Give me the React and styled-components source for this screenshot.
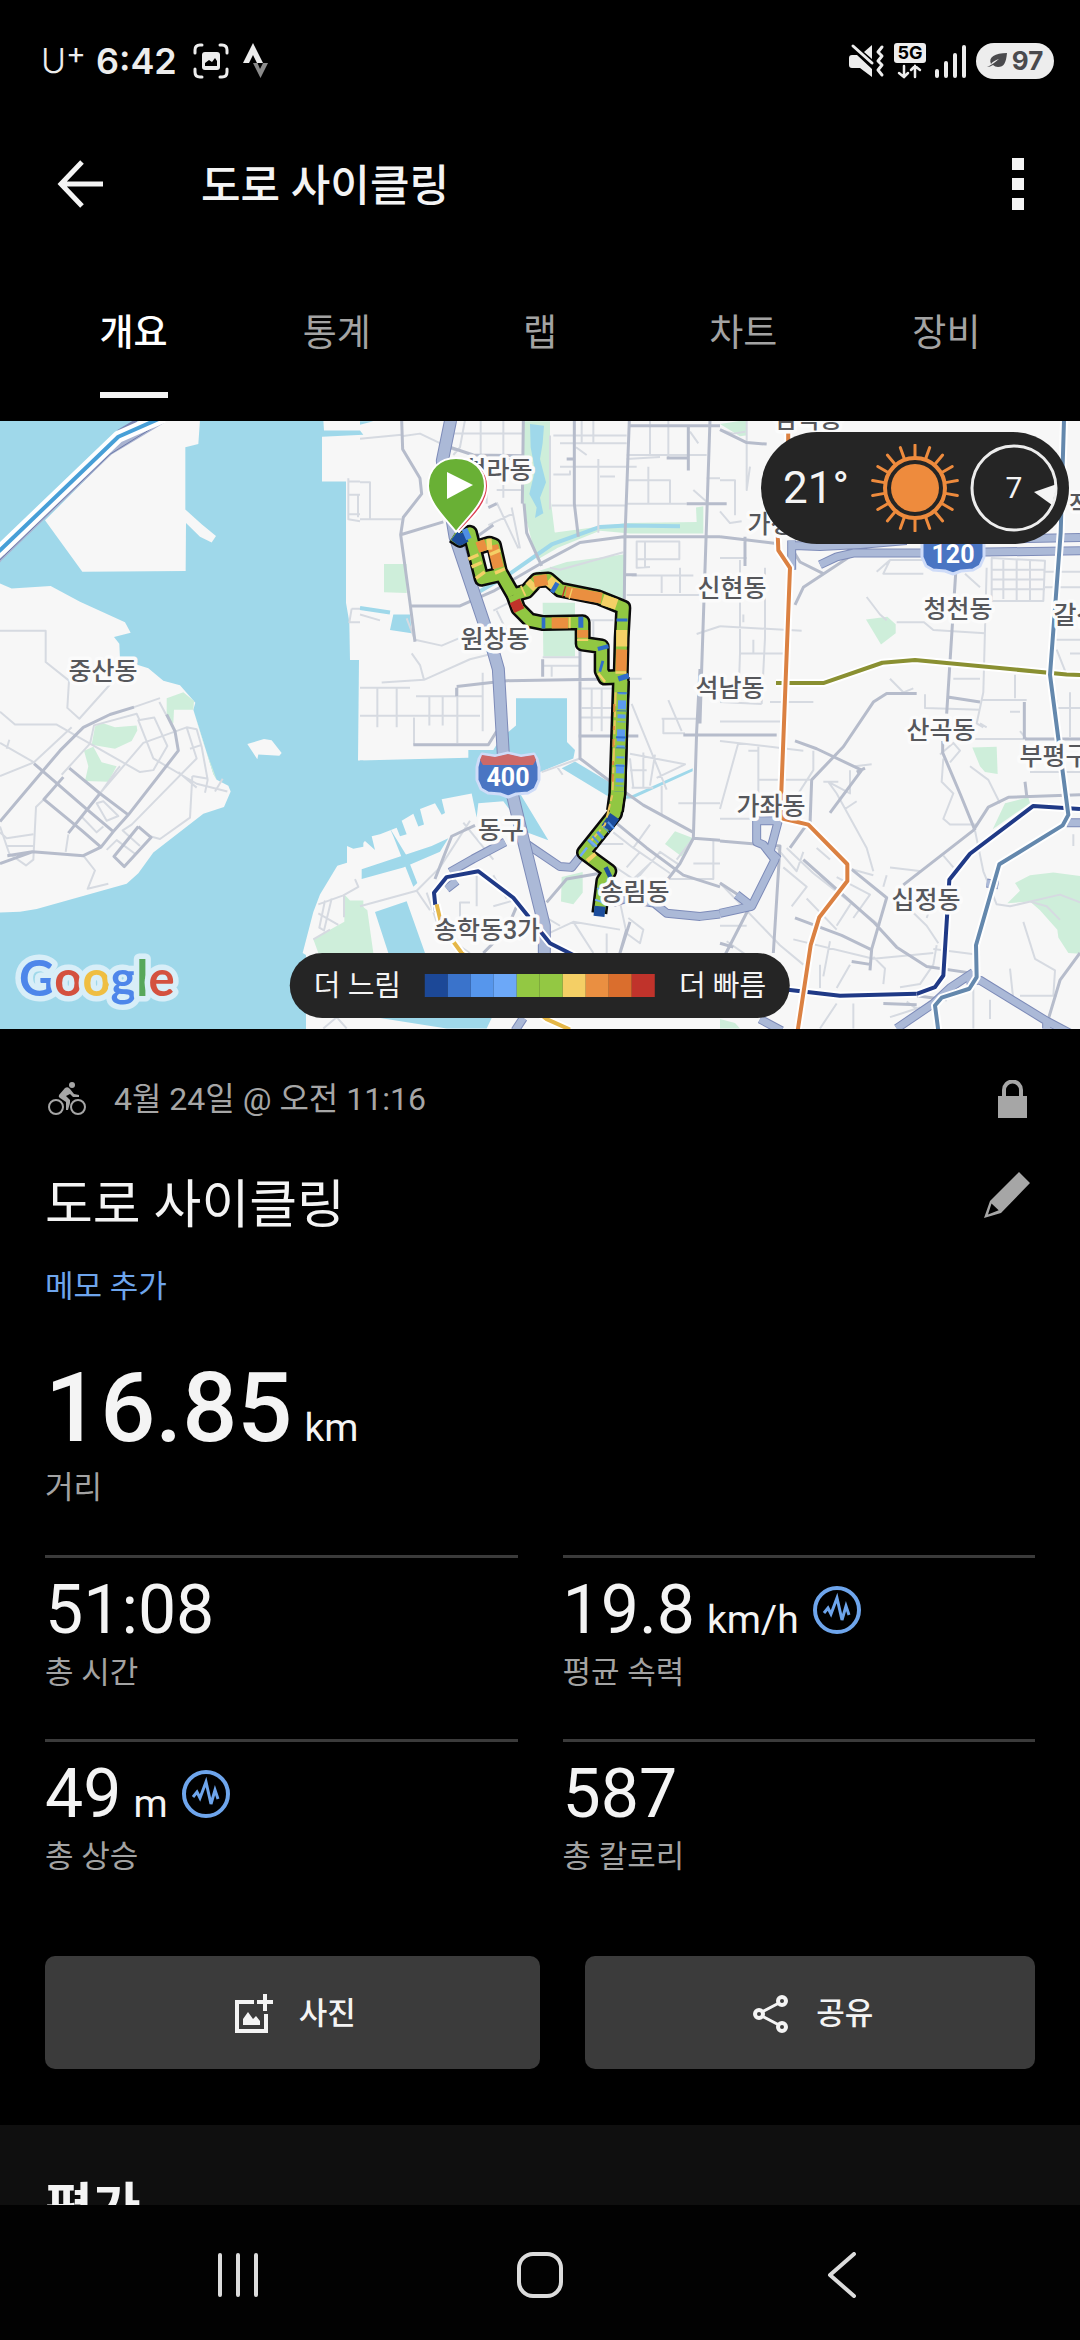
import React, { useState } from 'react'
import styled, { createGlobalStyle } from "styled-components";

const GlobalStyle = createGlobalStyle`
    * { box-sizing:border-box; }
    body {
        margin:0;
        background-color:#000;
        color:#f4f4f4;
        font-family:Roboto, "Noto Sans CJK KR", sans-serif;
    }
    button {
        font-family:inherit;
        color:inherit;
        background-color:transparent;
        border:none;
        padding:0;
        cursor:pointer;
    }
    svg { display:block; }
`;

const Page = styled.div`
    height:100vh;
    display:flex;
    flex-direction:column;
    background-color:#000;
`;

/* status bar */
const StatusBar = styled.div`
    flex:none;
    height:122px;
    padding:0 26px 0 41px;
    display:flex;
    align-items:center;
    justify-content:space-between;
    color:#ededed;
`;
const StatusGroup = styled.div`
    display:flex;
    align-items:center;
    gap:${props => props.$gap}px;
`;
const Carrier = styled.span`
    font-family:Inter, sans-serif;
    font-weight:300;
    font-size:34px;
    line-height:40px;
    display:flex;
`;
const CarrierPlus = styled.span`
    font-size:30px;
    line-height:24px;
    font-weight:400;
`;
const Clock = styled.span`
    font-family:Inter, sans-serif;
    font-weight:600;
    font-size:36px;
    line-height:40px;
    margin-right:6px;
`;
const Battery = styled.span`
    height:36px;
    width:78px;
    border-radius:18px;
    background-color:#ededed;
    color:#4a4a4d;
    display:flex;
    align-items:center;
    justify-content:center;
    gap:5px;
    font-family:Inter, sans-serif;
    font-size:26px;
    line-height:36px;
    font-weight:700;
`;

/* app bar */
const AppBar = styled.header`
    flex:none;
    height:124px;
    padding:0 45px;
    display:flex;
    align-items:center;
`;
const IconButton = styled.button`
    width:${props => props.$width || 60}px;
    height:60px;
    flex:none;
    display:flex;
    align-items:center;
    justify-content:${props => props.$align || "center"};
`;
const BarTitle = styled.h1`
    flex:1;
    margin:0 0 0 84px;
    padding-top:4px;
    font-size:43px;
    line-height:60px;
    font-weight:500;
`;

/* tabs */
const Tabs = styled.nav`
    flex:none;
    padding:58px 32px 23px;
    display:grid;
    grid-template-columns:repeat(5, 1fr);
    justify-items:center;
`;
const Tab = styled.button`
    font-size:37px;
    line-height:60px;
    font-weight:${props => props.$active ? 500 : 400};
    color:${props => props.$active ? "#fff" : "#a3a3a3"};
    padding-bottom:28px;
    border-bottom:6px solid ${props => props.$active ? "#f4f4f4" : "transparent"};
`;

const Scroll = styled.main`
    flex:1;
    min-height:0;
    overflow-y:auto;
    scrollbar-width:none;
`;

/* map */
const MapWrap = styled.div`
    position:relative;
    overflow:hidden;
`;
const MapSvg = styled.svg`
    width:100%;
    height:auto;
    path { vector-effect:non-scaling-stroke; fill:none; stroke-linejoin:round; }
`;
const Place = styled.text`
    font-size:25px;
    font-weight:500;
    fill:#56575b;
    stroke:#fbfbfb;
    stroke-width:7px;
    stroke-linejoin:round;
    paint-order:stroke;
    text-anchor:middle;
`;
const ShieldText = styled.text`
    font-family:Roboto, sans-serif;
    font-size:25px;
    font-weight:700;
    fill:#fff;
    text-anchor:middle;
`;
const MapLogo = styled.text`
    font-family:Lato, sans-serif;
    font-size:49px;
    font-weight:700;
    stroke:#d8eef8;
    stroke-width:11px;
    stroke-linejoin:round;
    paint-order:stroke;
`;
const Weather = styled.div`
    position:absolute;
    top:11px;
    right:11px;
    height:112px;
    padding:0 11px 0 22px;
    border-radius:56px;
    background-color:#252525;
    display:flex;
    align-items:center;
    gap:11px;
`;
const Temperature = styled.span`
    font-size:44px;
    line-height:60px;
    margin-right:11px;
`;
const Legend = styled.div`
    position:absolute;
    bottom:11px;
    left:50%;
    transform:translateX(-50%);
    height:65px;
    padding:0 24px;
    border-radius:33px;
    background-color:#252525;
    display:flex;
    align-items:center;
    gap:24px;
    font-size:29px;
    line-height:40px;
    white-space:nowrap;
`;
const Ramp = styled.div`
    display:flex;
    height:23px;
`;
const Swatch = styled.div`
    width:23px;
    background-color:${props => props.$color};
`;

/* details */
const Details = styled.section`
    padding:40px 45px 56px;
`;
const Row = styled.div`
    display:flex;
    align-items:center;
    justify-content:space-between;
`;
const Meta = styled.div`
    display:flex;
    align-items:center;
    gap:27px;
    padding-left:3px;
    font-size:32px;
    line-height:60px;
    color:#a6a6a6;
`;
const ActivityName = styled.h2`
    margin:41px 0 0;
    font-size:52px;
    line-height:72px;
    font-weight:400;
`;
const EditButton = styled(IconButton)`
    margin-top:18px;
`;
const NoteLink = styled.a`
    display:inline-block;
    margin-top:25px;
    font-size:31px;
    line-height:40px;
    color:#6ea5ec;
    text-decoration:none;
`;
const Distance = styled.div`
    margin-top:45px;
    font-size:97px;
    line-height:112px;
    font-weight:500;
`;
const Unit = styled.span`
    font-size:39px;
    line-height:40px;
    font-weight:400;
    margin-left:12px;
`;
const Label = styled.div`
    margin-top:4px;
    font-size:31px;
    line-height:40px;
    color:#a3a3a3;
`;
const Stats = styled.div`
    margin-top:47px;
    display:grid;
    grid-template-columns:1fr 1fr;
    column-gap:45px;
`;
const Stat = styled.div`
    border-top:3px solid #3b3b3b;
    padding:13px 0 46px;
`;
const Value = styled.div`
    display:flex;
    align-items:baseline;
    font-size:68px;
    line-height:78px;
`;
const GraphButton = styled.button`
    align-self:center;
    margin-left:14px;
`;
const Actions = styled.div`
    margin-top:33px;
    display:flex;
    gap:45px;
`;
const ActionButton = styled.button`
    flex:${props => props.$grow};
    height:113px;
    padding:2px 0 0 6px;
    border-radius:10px;
    background-color:#3b3b3b;
    display:flex;
    align-items:center;
    justify-content:center;
    gap:26px;
    font-size:31px;
    line-height:40px;
    font-weight:500;
`;
const Rating = styled.section`
    padding:48px 45px 60px;
    background-color:#0f0f0f;
`;
const RatingTitle = styled.h2`
    margin:0;
    font-size:52px;
    line-height:72px;
    font-weight:700;
`;

const NavBar = styled.nav`
    flex:none;
    height:135px;
    padding:5px 87px 0;
    background-color:#020202;
    display:grid;
    grid-template-columns:repeat(3, 1fr);
    align-items:center;
    justify-items:center;
`;

/* map data, three tiles side by side */
const tiles = [
    {
        land: "M-5 -5H3300V1600H-5Z",
        water: `M0 0H970L972 27H1080L1090 38 966 43V158H1038V470L1048 520 1050 617H1077L1074 875H1090V1097L1060 1102 1041 1095V1138L1012 1146 960 1220 940 1265 908 1370 918 1375V1570H0V1266L60 1264 110 1257 380 1192 415 1165 460 1112 610 1012 672 995 692 955 685 940 650 925 640 910 580 745 586 727 540 682 490 670 445 638 360 615 358 575 342 558 392 547 375 520 240 467 152 427 35 433 0 420Z`,
        isle: "M742 833 792 820 815 823 845 856 838 863 775 860 772 872ZM135 258 330 90 480 0H600L595 62 556 70V230L605 268 648 298 635 315 600 300 558 265 557 388 247 390Z",
        park: `M1033 1220 1050 1235H1090V1370H955L940 1335 990 1310 1033 1290ZM285 788 305 778 345 790 410 785 412 798 395 825 345 845 275 835ZM252 850 280 840 305 880 350 890 325 930 255 928 265 890ZM500 715 550 700 582 722 580 745H522L520 780 500 765ZM580 745 640 910 650 925 610 830Z`,
        minor: `M0 542H137V622L207 670 202 740 238 768 330 680M0 750 45 783H170L270 832 420 905 460 900 502 838 463 765 415 772 460 870 590 935 682 955M0 830 102 880 0 915M102 880 215 790M20 845 28 822M270 832 282 785 410 755 418 770M270 832 185 912M300 960 430 830 560 790 590 795 605 840 623 925 615 958M560 790 590 870 395 1040 368 1055 420 1095M300 960 350 900 360 890M577 915 570 1022 480 1077 450 1070M577 915 625 922M645 955 668 922M535 905 590 945M480 715 402 738M478 725 500 760M570 845 605 835M0 1060 20 1075 100 1065M20 1095H100M0 1045 28 1115 78 1145 100 1130 108 995 132 975M205 1065 197 1110M250 1120 285 1158 263 1205 325 1192M290 985 320 1030 355 1018 310 980ZM245 1020 290 1060 310 1045M320 1105 350 1080 405 1115M1045 150V255L1080 260M1045 158H1080M1045 192H1080M1074 192V250M1045 242H1080M1055 485 1048 520 1080 520M1055 485H1080M955 1245 1030 1222 1075 1200 1065 1180M975 1235 958 1305 972 1312 995 1230M955 1268 1015 1298M1032 1220V1278M940 1335 990 1310M970 1564 1010 1535 1040 1564`,
        major: `M0 1032 180 850 250 790 330 757 402 738M500 757 525 800 535 850 385 1015 340 1058 303 1098 250 1120 97 1110 0 1140M22 1120 97 1110M102 883 260 1000 340 1058M208 895 300 960 385 1015M190 918 132 975 245 1055 303 1098M205 1062 300 960M415 1045 453 1073 373 1148 342 1122 415 1045`,
        highway: "",
    },
    {
        water: `M0 875 325 868V848H400L420 820 468 785V715H621V828L645 848 640 870 540 905 480 960 565 1080 500 1060 430 980 355 985 350 1022 335 960 245 975 255 1010 245 1015 225 985 180 1000 192 1040 175 1045 160 1012 125 1030 140 1065 120 1070 110 1048 60 1065 35 1070 45 1105 15 1082 0 1095ZM5 1155 215 1095 265 1075 240 1110 130 1150 5 1180ZM90 1050 140 1120 172 1190 160 1200 100 1070ZM45 1265 140 1237 195 1370H85ZM605 895 645 878 815 965 998 895V903L820 972 780 975 740 965ZM90 540 100 500H150L155 548ZM60 1537H395L380 1564H260ZM0 3H40L0 12Z`,
        park: `M490 3H570V190L590 330 530 360 500 260 492 215ZM510 395 620 365 795 345 793 460 650 430 570 400ZM548 470H645V608H550ZM72 370H140V445L72 443ZM580 290 800 265 1010 262 1008 225 1030 222V292L810 292 720 285 560 340ZM915 1090 945 1057 1000 1075 965 1122ZM605 1175 668 1162V1215L640 1245 603 1238ZM0 1245 22 1260 40 1370H0Z`,
        river: `M510 10 552 15 548 60 540 100 558 160 540 200 550 240 525 252 530 225 508 190 525 130 512 70Z`,
        stream: "M360 440 450 395 575 320 720 275 800 271 960 273M0 483 90 495",
        minor: `M125 42 180 35 290 80M0 48 125 38M315 0 300 70 280 90M362 0V100M430 0V200M280 35H490M300 100H490M380 110V215M410 180H490M410 212 475 330M385 270 460 240M455 225 480 330M0 160H30V258M0 255H125M0 500 60 515M140 510 165 565 245 580 300 560 390 545M155 600 180 630 192 668 65 675M192 668 330 615 400 600M0 688H150M52 688V790M110 688V790M0 760H360M168 710H370M208 710V785M248 710V785M292 688V830M162 765V835M368 650V800M570 40V230M600 120H830M575 220H800M665 0V60M700 0V60M600 60H800M648 70 680 90M715 100V290M580 140H630V130M720 145H765M800 100 900 95M800 155H930V215M800 215H980M865 215V120M870 0V90M925 0V95M800 90H1040M990 30 1015 60M1040 150H1080M830 312H958V358H830ZM830 312V380L870 378M855 312V378M905 445V400M960 445V380M815 400H1000M800 450H1020M1000 180 1040 210M580 40H800M548 610H660M548 632H660M575 632V660M665 515H760M700 515V580M665 690H760M695 690V800M665 740H760M725 690V800M660 765H760M815 730 920 950M925 720 965 800M905 768H1020M910 768V805H975M810 858 975 885 890 920M850 855V945M885 860 870 940M810 900H860M815 945H880M810 870 820 945M955 985H1080M905 940V1015M1010 550 1080 530M845 665H808M200 1215 230 1290 250 1330M0 1250 170 1210 210 1260M170 1210 240 1150 330 1030M310 1035 400 1130M250 1300H300V1240H330M260 1330 330 1370M350 1150V1250M400 1170 440 1230M400 1250 460 1235M540 1330 640 1290 780 1310M640 1290 700 1370M600 1300 560 1280M780 1240 800 1320 840 1345 850 1310 805 1280M740 1320V1370M870 1040 820 1100 760 1060M960 1145 900 1110 820 1190M820 1100 930 1165M1000 1075 950 1130M870 1140 820 1180 750 1140M1080 1140H1000M400 490 480 455M410 490 450 560M545 905 660 870M590 890 608 912M700 1090 790 1090M570 380 600 385 790 340M930 1180H1060V1080M840 1110 800 1150`,
        major: `M125 0 128 75 180 150 185 190 130 250 122 295 150 470 165 570M122 295 250 262M150 478H300L400 440 540 370 660 315 790 300 1080 300M270 70 340 90 490 92M492 215 500 290 545 375M490 0 487 215M643 0V215L655 300M808 0 795 300 793 460M805 15H1080M985 15V130M1050 0 1025 640 1020 780M1020 640 1010 800 1000 1075M620 100H640M920 98H985M980 215H1080M290 685 440 670 800 665M290 688V710M548 615V660M660 560V870L760 935 850 990 1000 1060M160 835H385L410 800M655 812H835M970 810H1080M795 398H830M760 1030 860 1100 970 1170 1080 1200M1000 1075 1080 1080M1000 1075 960 1140 870 1240M345 1042 275 1070 225 1180M400 270 350 300M385 225 410 215M800 1310 780 1370 810 1290M560 1240 620 1180 720 1165M370 1370 440 1310 470 1250M700 1570H1080`,
        highway: `M270 1162 340 1128 435 1085M500 1090 600 1148 635 1150 672 1110M880 1240 920 1268 1020 1276 1080 1270M260 1205 290 1185M465 1570 490 1537M760 1240 800 1230 880 1242`,
        trunk: "M272 0 247 105 285 300 395 580 415 640 430 860 462 980 490 1080 553 1300V1370",
    },
    {
        park: `M0 10 78 0V40L60 42ZM438 513 502 506 527 525V548L483 577ZM757 842 830 840 833 910 795 905 780 890ZM818 1052 855 985 925 970 930 985ZM862 1242 900 1210 885 1190 930 1170 1000 1163 1080 1172V1372L1045 1370 1015 1330 1012 1310 960 1260 930 1238ZM0 1540 45 1550 60 1564H0Z`,
        minor: `M0 25 40 35 75 30M80 0V180L90 120M0 155H45V245M0 235 30 265 65 260M60 360V600M0 355H80M0 530 245 542M135 380V560L125 730M60 600H190M100 600V565M0 725 125 730M0 775H190M0 825 250 850M60 600 55 725M150 725H280M280 850V900L190 1020M115 840V1030M55 830 0 1000M0 1025H130M115 925H270M85 850H115M470 390 510 360 490 395H610M510 360H620M440 455 480 500 500 515M530 520H612L640 540 795 548M735 395 780 430M815 355V465H970L975 362ZM850 360V460M890 360V465M930 360V465M815 385H975M815 410H975M815 435H975M970 390H1080M975 430H1080M800 380 790 700 770 780 790 790M785 720H920M885 655V715M780 780 800 790M1010 590 1040 655 1080 660M1000 565H1080M700 665H780M510 665 550 700 580 690M615 705V740L780 745M700 820H920L900 800M670 870 665 930 700 960 670 1025 690 1040H770M690 880 720 850 700 830 660 860M750 890 805 925 840 985M765 1055 790 1160 830 1245 870 1250 1020 1220 1080 1240M670 1120 700 1150M460 1160 440 1100 350 960 325 930 390 960V900M310 930H355M375 1000 410 980M405 890 455 885M395 1155 460 1170M510 1150 605 1160M500 1170 490 1200M560 1250 620 1300 655 1345M650 1350 640 1400 600 1450 540 1458M250 1110 230 1160 170 1100M190 1150 260 1200 215 1250M290 1100 330 1130M200 1100 280 1165 480 1300M350 1175 450 1220 400 1280M300 1170 395 1240 350 1300M260 1230 350 1310M0 1190 180 1350 250 1400M220 1335 460 1385 640 1370M460 1380 495 1410 490 1450M300 1400V1460M330 1340 310 1430M390 1400 350 1460M640 1360 780 1375M620 1280 640 1230M910 1290 945 1385 1005 1415 1000 1480M870 1410 880 1490M900 1480H1010M930 1238 980 1250 1020 1285M760 1450V1564M810 1490V1540M560 1495 600 1520M510 1535 600 1510M400 1500V1564M350 1500 300 1564M1060 1065V1095M930 905H1080M1010 720V820M1050 700V815M1000 740H1080M1050 600H1080M900 750H870M0 1300H80M20 1340 120 1400M70 500V520`,
        major: `M0 25 80 58 140 62M0 215H20M0 300 175 318M75 300V375M215 330 240 365 310 395M400 345 250 430 225 475M0 810H170M225 825 290 845 425 900 330 1010M435 895 410 905M270 1040 275 925 370 840 460 725 500 703H590M707 395 680 755M683 712 780 725M668 825V855L720 960 765 1055M550 1195 760 1055 805 995 865 970 1080 963M913 725V820M915 820H1080M915 930 920 965M0 1082 180 1095 160 1370M260 1040 210 1100M395 1155 500 1228 455 1360 450 1415M250 1130 460 1290 530 1355 620 1405 780 1425M225 1280 365 1325 455 1362M395 1392 455 1400M0 1190 90 1240M90 1250 30 1350 0 1400M490 1500 590 1503M1080 1370 1020 1440 985 1540M590 1480 680 1490M0 1345 40 1355`,
        highway: `M300 372 350 352 400 342 600 342 1080 336M215 310V385M205 322 300 325 420 320 560 310M700 308 1080 302M0 1268 95 1250 165 1130 130 1092 110 1085V1030H175L150 1110 175 1130M50 1220 95 1250M740 1440 780 1440 980 1545 1080 1590M530 1564 640 1500 690 1460 760 1420M1040 1035H1080M120 1540 185 1570M800 1190 835 1195M980 1545V1564`,
    },
];

// transit lines: tile, colour, path
const transit = [
    [0, "#479fd7", "M-20 350 0 335 355 43 490 -8"],
    [1, "#203a87", "M228 1265 222 1215 260 1175 355 1160 460 1228 570 1345 640 1375 760 1420 1290 1465 1440 1480 1670 1475"],
    [1, "#e5b748", "M230 1245 245 1300 305 1370 560 1540 630 1567"],
    [2, "#203a87", "M590 1475 645 1458 670 1428 688 1182 750 1115 940 992 1080 1000"],
    [2, "#8a9032", "M168 676H312L487 624 585 617 1040 654 1090 656"],
    [2, "#db8142", "M205 0 203 200 173 290 175 335 210 380 182 1000 190 1025 265 1040 382 1142V1185L298 1278 272 1350 233 1570"],
    [2, "#6488ad", "M1032 0 1022 290 990 655 1045 1015 1028 1042 838 1142 768 1350 770 1432 748 1462 665 1485 645 1505 655 1570"],
];

const places = [
    [103, 259, "중산동"],
    [498, 58, "청라동"],
    [495, 227, "원창동"],
    [732, 176, "신현동"],
    [730, 276, "석남동"],
    [501, 418, "동구"],
    [635, 480, "송림동"],
    [487, 518, "송학동3가"],
    [808, 7, "검석동"],
    [782, 112, "가정동"],
    [771, 394, "가좌동"],
    [958, 197, "청천동"],
    [941, 318, "산곡동"],
    [926, 488, "십정동"],
    [1088, 203, "갈산동"],
    [1054, 344, "부평구"],
    [1092, 93, "작전"],
];

const routePaths = [
    "M280 297 300 308 330 290 365 408 415 398",
    "M350 328 388 318 402 322 420 390 460 450",
    "M460 450 500 440 530 412 565 410 600 436 715 456 790 482 785 560 782 660",
    "M460 450 475 485 510 515 550 522 668 520V575L725 582V645L735 662 790 660",
    "M785 660 775 960 765 1012 672 1112 748 1160 730 1185 718 1268",
];
const trunkPath = "M783 670 772 960 765 1005";

// speed colours on top of the route: colour, path
const speeds = [
    ["#1c4d9c", "M283 297 300 308 318 300"],
    ["#4f8fe4", "M312 296 328 290"],
    ["#f4d066", "M338 348 342 356M348 368 352 376M358 395 364 402"],
    ["#ea8f40", "M352 328 378 320M398 322 415 380"],
    ["#f4d066", "M380 320 396 319M403 336 407 344M418 384 422 392"],
    ["#c1332a", "M464 465 478 490"],
    ["#f4d066", "M508 430 522 418M565 412 590 430M728 462 770 474M487 440 492 438M785 540V582"],
    ["#ea8f40", "M522 416 562 410M618 442 725 458M785 590 783 645M575 522H625M668 540V560"],
    ["#f4d066", "M626 521H632M668 562V568M630 446 634 447"],
    ["#c1332a", "M610 440 614 441"],
    ["#2f6dc9", "M578 428 590 434M545 522 556 522M655 520H670M728 580 731 590M720 632 728 634M786 510V518M788 655 793 668"],
    ["#f4d066", "M783 646V652M722 664 728 660M690 1120 698 1128"],
    ["#1c4d9c", "M764 1018 738 1050M738 1165 750 1160M720 1250 717 1276"],
    ["#6ea8f7", "M700 1085 695 1090M674 1112 668 1108M725 1212 721 1215M722 1235 720 1240"],
];

const ramp = ["#1c4897", "#3a73cb", "#5696ec", "#6ca8f8", "#93c843", "#93c843", "#f4cf65", "#ea8f41", "#da6e2d", "#c0332b"];

const at = (i) => `translate(${i * 360} -1) scale(0.33333 0.38903)`;

const logo = [["G", "#4e86ea"], ["o", "#d4513f"], ["o", "#efbe42"], ["g", "#4e86ea"], ["l", "#57a75a"], ["e", "#d4513f"]];

function Shield({ x, y, children }) {
    return (
        <g transform={`translate(${x} ${y})`}>
            <polygon fill="#4a75c3" stroke="#cfdcf8" strokeWidth="3" strokeLinejoin="round" points="-29,-15 -26,-20 -13,-18 0,-21 13,-18 26,-20 29,-15 31,-7 31,6 27,15 20,19 8,20 0,23 -8,20 -20,19 -27,15 -31,6 -31,-7" />
            <polygon fill="#cd6968" points="-26,-19 -13,-17 0,-20 13,-17 26,-19 28,-14 25,-9 -25,-9 -28,-14" />
            <ShieldText y="12">{children}</ShieldText>
        </g>
    )
}

function RouteMap() {
    return (
        <MapSvg viewBox="0 0 1080 608" role="img" aria-label="지도">
            {tiles.map((t, i) => (
                <g key={i} transform={at(i)}>
                    {t.land && <path d={t.land} style={{ fill: "#f7f7f7" }} />}
                    <path d={t.water} style={{ fill: "#9fd8ea" }} />
                    {t.isle && <path d={t.isle} style={{ fill: "#f7f7f7" }} />}
                    <path d={t.park} style={{ fill: "#ceeeda" }} />
                    <path d={t.river} style={{ fill: "#9fd8ea" }} />
                    <path d={t.stream} stroke="#9fd8ea" strokeWidth="4" />
                </g>
            ))}
            {tiles.map((t, i) => (
                <g key={i} transform={at(i)}>
                    <path d={t.minor} stroke="#d6dae1" strokeWidth="2" />
                    <path d={t.major} stroke="#b6bccb" strokeWidth="3" />
                    <path d={t.highway} stroke="#7d8bb8" strokeWidth="9" />
                    <path d={t.highway} stroke="#abb9d7" strokeWidth="7" />
                    <path d={t.trunk} stroke="#7d8bb8" strokeWidth="13" />
                    <path d={t.trunk} stroke="#abb9d7" strokeWidth="11" />
                </g>
            ))}
            <g transform={at(0)}>
                <path d="M-20 375 0 354 330 82 490 0" stroke="#a9b3d0" strokeWidth="6" />
                <path d="M-20 380 0 359 330 88 480 8" stroke="#6e7bab" strokeWidth="1" />
                <path d="M355 30 410 2" stroke="#7d8bb8" strokeWidth="4" />
            </g>
            {transit.map(([tile, color, d], i) => (
                <g key={i} transform={at(tile)}>
                    <path d={d} stroke="#fff" strokeWidth={tile === 0 ? 12 : 8} />
                    <path d={d} stroke={color} strokeWidth="4" />
                </g>
            ))}

            {/* recorded route */}
            <g transform={at(1)}>
                {routePaths.map((d) => <path key={d} d={d} stroke="#0a0a0a" strokeWidth="16" />)}
                <path d={trunkPath} stroke="#0a0a0a" strokeWidth="18" />
                {routePaths.map((d) => <path key={d} d={d} stroke="#91c742" strokeWidth="11" />)}
                <path d={trunkPath} stroke="#91c742" strokeWidth="13" />
                {speeds.map(([c, d]) => <path key={d} d={d} stroke={c} strokeWidth="11" />)}
                <path d="M767 700 758 960 735 1040 690 1085" stroke="#ecc35c" strokeWidth="2" strokeDasharray="14 5 6 3" />
                <path d="M763 730 758 930" stroke="#e08a3c" strokeWidth="2" strokeDasharray="8 14 4 9" />
                <path d="M787 700 778 955" stroke="#5c9bef" strokeWidth="8" strokeDasharray="2 6 9 5 4 3 1 7 12 4 2 9" />
                <path d="M787 700 778 955" stroke="#2f6dc9" strokeWidth="10" strokeDasharray="1 17 1 25 2 9" />
                <path d="M755 1040 685 1095" stroke="#4f8fe4" strokeWidth="9" strokeDasharray="2 5 1 6 3 4" />
            </g>

            {places.map(([x, y, name]) => <Place key={name} x={x} y={y}>{name}</Place>)}
            <Shield x={508} y={353}>400</Shield>
            <Shield x={953} y={130}>120</Shield>

            {/* start and finish pins */}
            <path d="M459 111C448 99 431 82 431 65A28 27 0 0 1 488 65C488 84 470 99 459 111Z" style={{ fill: "#dc3c50", stroke: "#fff", strokeWidth: 2 }} />
            <path d="M456 111C446 98 428 82 428 65C428 48 440 37 456 37C473 37 485 48 485 65C485 82 466 98 456 111Z" style={{ fill: "#69b035", stroke: "#fff", strokeWidth: 2 }} />
            <polygon points="447,51 473,64 447,78" fill="#fff" />

            <MapLogo x="19" y="575">
                {logo.map(([ch, color], i) => <tspan key={i} fill={color}>{ch}</tspan>)}
            </MapLogo>
        </MapSvg>
    )
}

function Sun() {
    return (
        <svg width="88" height="88" viewBox="-44 -44 88 88" aria-hidden="true">
            <circle r="24" fill="#ee8b3d" />
            <circle r="30" fill="none" stroke="#ee8b3d" strokeWidth="4" />
            {Array.from({ length: 18 }, (_, i) => (
                <line key={i} y1="-31" y2="-43" stroke="#ee8b3d" strokeWidth="3" strokeLinecap="round" transform={`rotate(${i * 20})`} />
            ))}
        </svg>
    )
}

function Wind() {
    return (
        <svg width="88" height="88" viewBox="-44 -44 88 88" role="img" aria-label="바람">
            <circle r="42" fill="none" stroke="#ededed" strokeWidth="3" />
            <polygon points="20,4 43,-4 38,17" fill="#f4f4f4" />
            <text y="10" fontSize="30" textAnchor="middle" fill="#f4f4f4">7</text>
        </svg>
    )
}

function Graph() {
    return (
        <svg width="48" height="48" viewBox="0 0 48 48" fill="none" stroke="#6ea5ec">
            <circle cx="24" cy="24" r="22" strokeWidth="4" />
            <path strokeWidth="3" d="M11 27 15 22 18 28 24 12 29 34 33 20 36 29" />
        </svg>
    )
}

const stats = [
    { value: "51:08", label: "총 시간" },
    { value: "19.8", unit: "km/h", label: "평균 속력", graph: true },
    { value: "49", unit: "m", label: "총 상승", graph: true },
    { value: "587", label: "총 칼로리" },
];

function App() {
    const [tab, setTab] = useState("개요");

    return (
        <Page>
            <GlobalStyle />
            <StatusBar>
                <StatusGroup $gap={10}>
                    <Carrier>U<CarrierPlus>+</CarrierPlus></Carrier>
                    <Clock>6:42</Clock>
                    <svg width="36" height="36" viewBox="0 0 36 36" fill="none" stroke="#ededed" strokeWidth="3" strokeLinecap="round">
                        <path d="M2 10V7Q2 2 7 2H9M27 2H29Q34 2 34 7V10M34 26V29Q34 34 29 34H27M9 34H7Q2 34 2 29V26" />
                        <rect x="9" y="9" width="18" height="18" rx="3" fill="#ededed" stroke="none" />
                        <path d="M12 23V20L16 17 19 19 22 15 24 18V23Z" fill="#000" stroke="none" />
                    </svg>
                    <svg width="36" height="36" viewBox="-4 0 36 36">
                        <path d="M10 0 20 20H14L10 12 6 20H0Z" fill="#ededed" />
                        <path d="M10 20H14.500L17 26 20 20H25L17.500 35Z" fill="#8a8a8a" />
                    </svg>
                </StatusGroup>
                <StatusGroup $gap={9}>
                    <svg width="36" height="36" viewBox="0 0 36 36" fill="#ededed">
                        <path d="M3 12H8L23 26V34L11 25H3Q0 25 0 22V15Q0 12 3 12ZM23 2V16L15 9Z" />
                        <path d="M4 3 23 20" stroke="#ededed" strokeWidth="3" strokeLinecap="round" />
                        <path d="M33 4 29 9 33 13 29 18 33 22 29 27 33 32" fill="none" stroke="#ededed" strokeWidth="3" strokeLinecap="round" strokeLinejoin="round" />
                    </svg>
                    <svg width="32" height="36" viewBox="0 0 32 36">
                        <rect width="32" height="20" rx="3" fill="#ededed" />
                        <text x="16" y="16" textAnchor="middle" fontFamily="Inter" fontWeight="700" fontSize="18" fill="#000">5G</text>
                        <path d="M10 23V34M5 30 10 34 14 30M21 34V23M17 27 21 23 26 27" fill="none" stroke="#ededed" strokeWidth="2.500" strokeLinecap="round" />
                    </svg>
                    <svg width="32" height="34" viewBox="0 0 32 34" stroke="#ededed" strokeWidth="4" strokeLinecap="round">
                        <path d="M2 27V32M11 19V32M20 11V32M29 3V32" />
                    </svg>
                    <Battery>
                        <svg width="20" height="16" viewBox="0 0 20 16" fill="#4a4a4d">
                            <path d="M20 0C19 10 17 14 11 14Q8 14 6 12 3 14 0 14 5 12 12 6 6 8 4 11C1 4 8 0 20 0Z" />
                        </svg>
                        97
                    </Battery>
                </StatusGroup>
            </StatusBar>

            <AppBar>
                <IconButton $width={72} aria-label="뒤로">
                    <svg width="48" height="48" viewBox="0 0 48 48" fill="none" stroke="#f4f4f4" strokeWidth="5">
                        <path d="M25 2 4 24 25 46M4 24H46" />
                    </svg>
                </IconButton>
                <BarTitle>도로 사이클링</BarTitle>
                <IconButton $width={24} $align="flex-end" aria-label="메뉴">
                    <svg width="24" height="52" viewBox="0 0 24 52" fill="#f4f4f4">
                        <rect x="1" width="12" height="12" />
                        <rect x="1" y="20" width="12" height="12" />
                        <rect x="1" y="40" width="12" height="12" />
                    </svg>
                </IconButton>
            </AppBar>

            <Tabs>
                {["개요", "통계", "랩", "차트", "장비"].map((name) => (
                    <Tab key={name} $active={name === tab} onClick={() => setTab(name)}>{name}</Tab>
                ))}
            </Tabs>

            <Scroll>
                <MapWrap>
                    <RouteMap />
                    <Weather>
                        <Temperature>21°</Temperature>
                        <Sun />
                        <Wind />
                    </Weather>
                    <Legend>
                        <span>더 느림</span>
                        <Ramp>
                            {ramp.map((color, i) => <Swatch key={i} $color={color} />)}
                        </Ramp>
                        <span>더 빠름</span>
                    </Legend>
                </MapWrap>

                <Details>
                    <Row>
                        <Meta>
                            <svg width="39" height="34" viewBox="0 0 39 34" fill="#a6a6a6">
                                <circle cx="24" cy="3" r="3" />
                                <path d="M11 13 17 6Q20 4 22 7L26 12 31 13V15H25L22 12 18 14 22 18V21L20 28H18L18 20 12 16Q10 15 11 13Z" />
                                <g fill="none" stroke="#a6a6a6" strokeWidth="2">
                                    <circle cx="8" cy="25" r="7" />
                                    <circle cx="30" cy="25" r="7" />
                                </g>
                            </svg>
                            <span>4월 24일 @ 오전 11:16</span>
                        </Meta>
                        <IconButton $width={45} aria-label="비공개">
                            <svg width="29" height="38" viewBox="0 0 29 38" fill="#a6a6a6">
                                <rect y="16" width="29" height="22" />
                                <path d="M6 18V10A8 8 0 0 1 23 10V18" fill="none" stroke="#a6a6a6" strokeWidth="4" />
                            </svg>
                        </IconButton>
                    </Row>
                    <Row>
                        <ActivityName>도로 사이클링</ActivityName>
                        <EditButton $width={56} aria-label="수정">
                            <svg width="46" height="46" viewBox="0 0 46 46" fill="#a6a6a6">
                                <path fillRule="evenodd" d="M35 0 46 11 17 41 0 46 6 29ZM7.500 31.500 4 42.500 14.700 38.300Z" />
                            </svg>
                        </EditButton>
                    </Row>
                    <NoteLink href="#note">메모 추가</NoteLink>

                    <Distance>16.85<Unit>km</Unit></Distance>
                    <Label>거리</Label>

                    <Stats>
                        {stats.map((s) => (
                            <Stat key={s.label}>
                                <Value>
                                    {s.value}
                                    {s.unit && <Unit>{s.unit}</Unit>}
                                    {s.graph && <GraphButton aria-label={s.label}><Graph /></GraphButton>}
                                </Value>
                                <Label>{s.label}</Label>
                            </Stat>
                        ))}
                    </Stats>

                    <Actions>
                        <ActionButton $grow={11}>
                            <svg width="38" height="40" viewBox="0 0 38 40" fill="none" stroke="#f4f4f4" strokeWidth="4">
                                <path d="M19 8H2V37H31V20M30 0V17M22 8H38" />
                                <path d="M8 31V25L13 18 18 25 21 22 25 27V31Z" fill="#f4f4f4" stroke="none" />
                            </svg>
                            사진
                        </ActionButton>
                        <ActionButton $grow={10}>
                            <svg width="38" height="40" viewBox="0 0 38 40" fill="none" stroke="#f4f4f4" strokeWidth="4">
                                <path d="M10 18 27 9M10 22 27 31" strokeWidth="3" />
                                <circle cx="7" cy="20" r="4" />
                                <circle cx="30" cy="7" r="4" />
                                <circle cx="30" cy="33" r="4" />
                            </svg>
                            공유
                        </ActionButton>
                    </Actions>
                </Details>

                <Rating>
                    <RatingTitle>평가</RatingTitle>
                </Rating>
            </Scroll>

            <NavBar>
                <IconButton aria-label="최근 앱">
                    <svg width="42" height="46" viewBox="0 0 42 46" stroke="#dcdcdc" strokeWidth="4" strokeLinecap="round">
                        <path d="M3 3V43M21 3V43M39 3V43" />
                    </svg>
                </IconButton>
                <IconButton aria-label="홈">
                    <svg width="46" height="46" viewBox="0 0 46 46" fill="none" stroke="#dcdcdc" strokeWidth="4">
                        <rect x="2" y="2" width="42" height="42" rx="14" />
                    </svg>
                </IconButton>
                <IconButton aria-label="뒤로 가기">
                    <svg width="30" height="46" viewBox="0 0 30 46" fill="none" stroke="#dcdcdc" strokeWidth="4" strokeLinecap="round" strokeLinejoin="round">
                        <path d="M27 2 3 23 27 44" />
                    </svg>
                </IconButton>
            </NavBar>
        </Page>
    )
}

export default App;
